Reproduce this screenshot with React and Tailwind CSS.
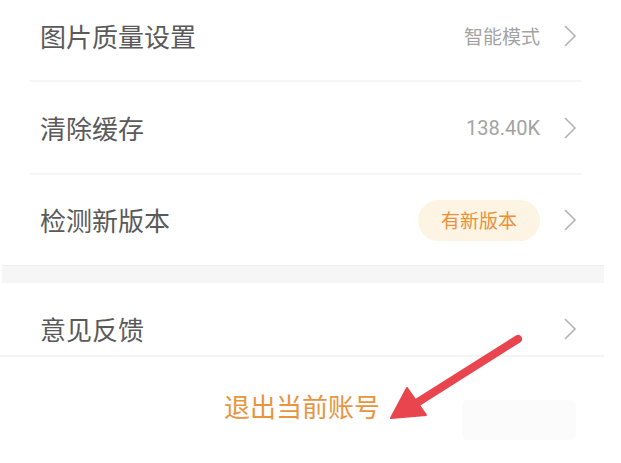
const font = { fontFamily: '"Noto Sans CJK SC", "Noto Sans", sans-serif' };

function Chevron() {
  return (
    <svg width="14" height="24" viewBox="0 0 14 24" className="shrink-0">
      <polyline points="2,2 12,12 2,22" fill="none" stroke="#b3b3b3" strokeWidth="1.6" />
    </svg>
  );
}

function Row({ title, className = '', children }) {
  return (
    <div className={`flex items-center pl-[40px] pr-[27px] ${className}`}>
      <span className="flex-1 text-[26px] leading-none text-[#5a5a5a]">{title}</span>
      {children}
      <div className="ml-[23px] flex items-center">
        <Chevron />
      </div>
    </div>
  );
}

export default function App() {
  return (
    <div
      className="relative w-[621px] h-[463px] overflow-hidden bg-white"
      style={font}
    >
      <div className="w-[604px]">
        {/* first group */}
        <Row title="图片质量设置" className="h-[80px] pb-[8px]">
          <span className="text-[19px] text-[#a3a3a3]">智能模式</span>
        </Row>
        <div className="ml-[30px] mr-[22px] h-[2px] bg-[#f6f6f6]" />

        <Row title="清除缓存" className="h-[91px]">
          <span className="text-[20px] text-[#a3a3a3]" style={{ fontFamily: 'Roboto, "Liberation Sans", sans-serif' }}>
            138.40K
          </span>
        </Row>
        <div className="ml-[30px] mr-[22px] h-[2px] bg-[#f6f6f6]" />

        <Row title="检测新版本" className="h-[90px]">
          <span className="flex h-[41px] w-[122px] items-center justify-center rounded-full bg-[#fdf4e4] text-[19px] text-[#e8913a]">
            有新版本
          </span>
        </Row>

        {/* group gap */}
        <div className="ml-[2px] h-[18px] border-t border-[#eeeeee] bg-[#f6f6f6]" />

        <Row title="意见反馈" className="h-[72px] pt-[20px]" />
        <div className="h-[2px] bg-[#f4f4f4]" />

        <div className="flex justify-center pt-[36px]">
          <span className="text-[26px] leading-none text-[#e8953e]">退出当前账号</span>
        </div>
      </div>

      {/* faint smudge */}
      <div className="absolute left-[462px] top-[400px] h-[40px] w-[114px] rounded-md bg-[#fbfbfb]" />

      {/* annotation arrow */}
      <svg className="pointer-events-none absolute left-0 top-0" width="621" height="463">
        <line x1="518" y1="339" x2="415" y2="404" stroke="#e8454f" strokeWidth="8" strokeLinecap="round" />
        <polygon points="391,418 407,388 426,415" fill="#e8454f" stroke="#e8454f" strokeWidth="2" strokeLinejoin="round" />
      </svg>
    </div>
  );
}
